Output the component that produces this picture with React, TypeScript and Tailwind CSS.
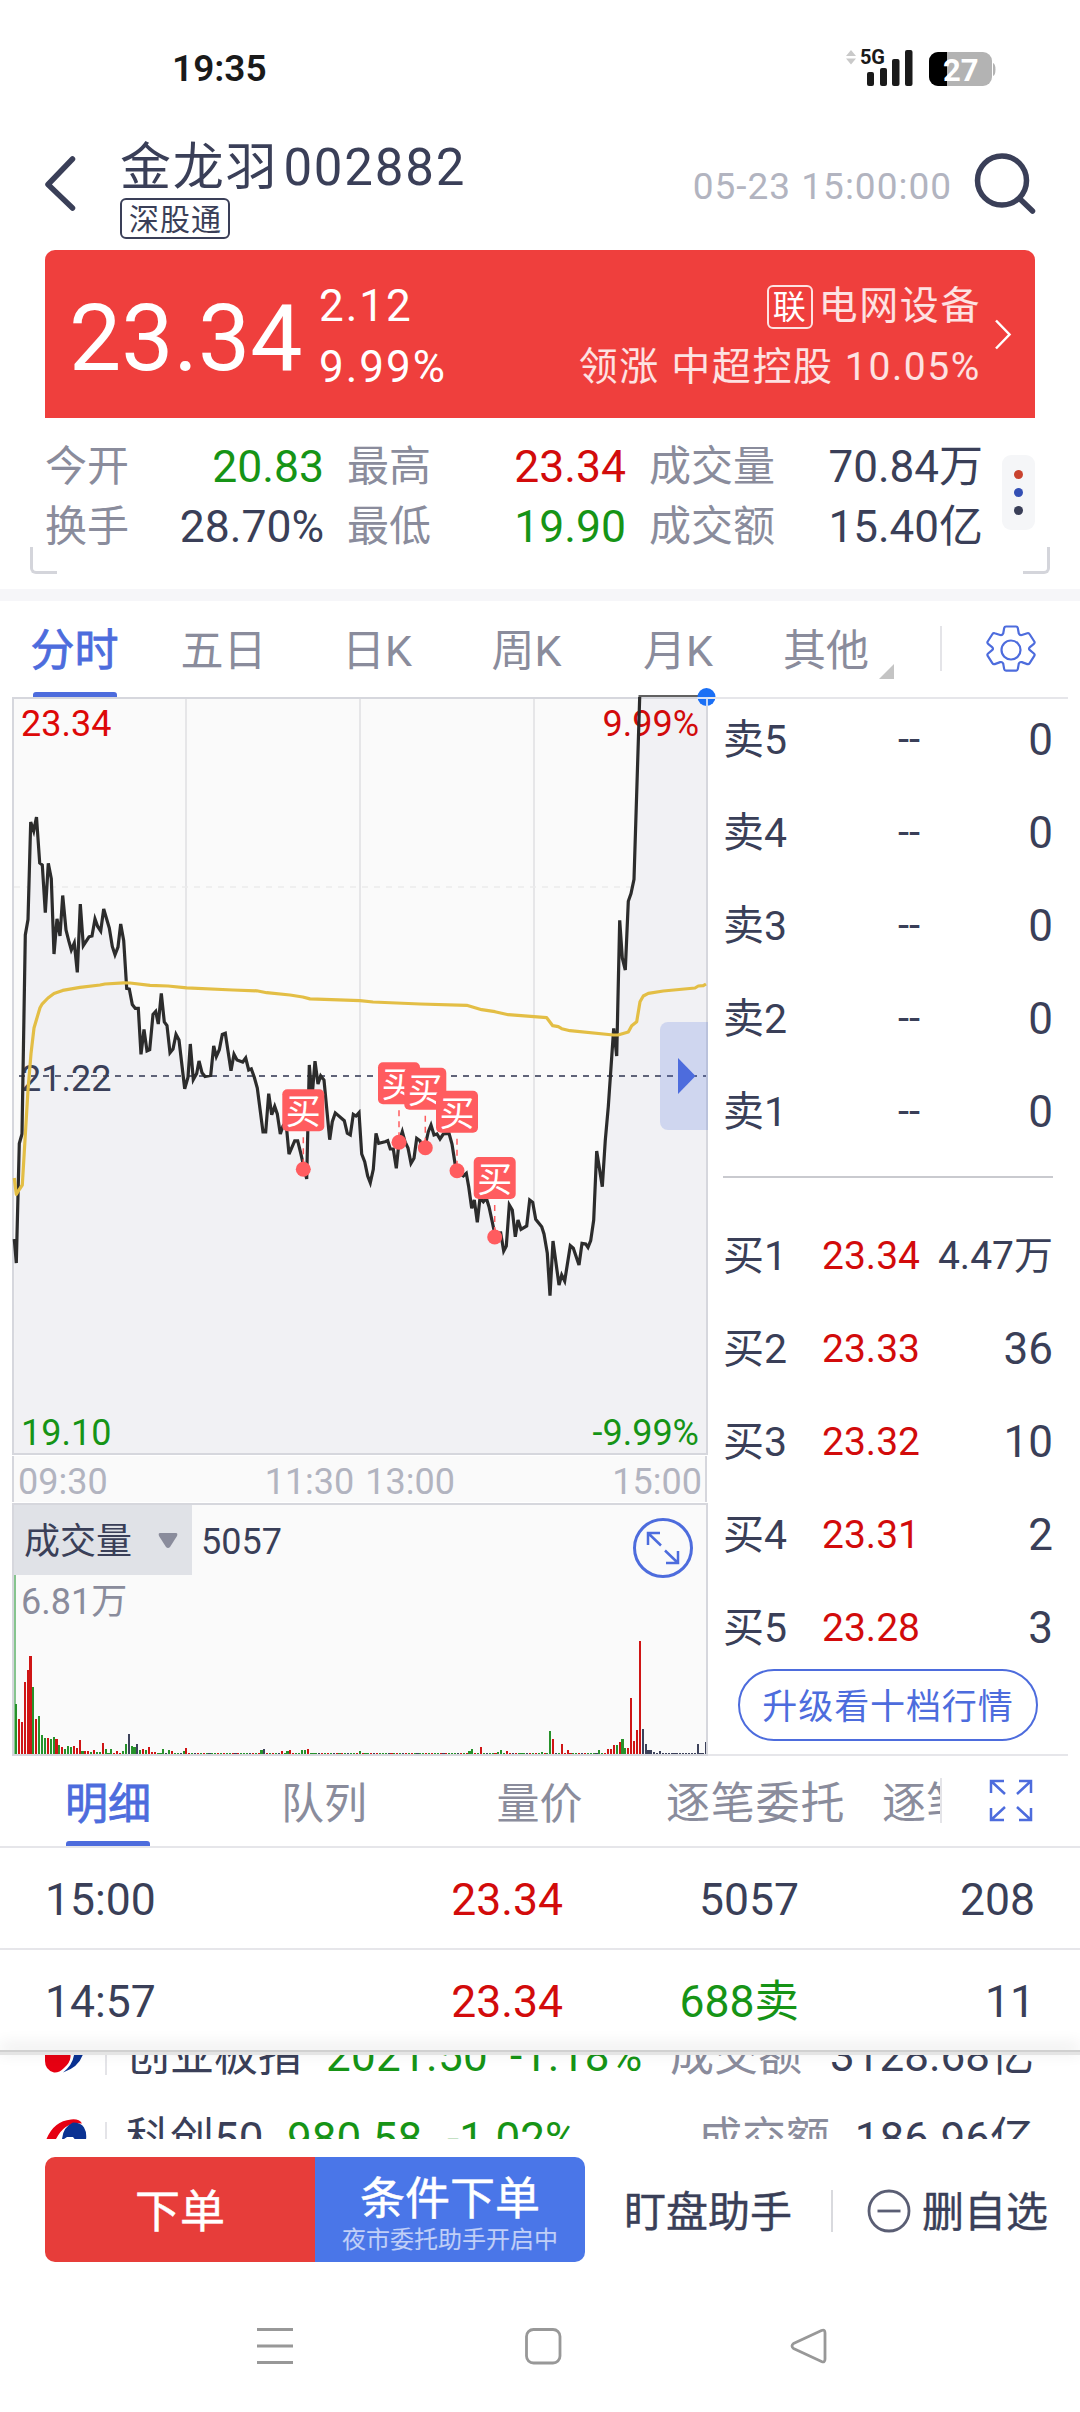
import { ReactNode } from "react";

const PRICE_LINE =
  "14.3,1239 16.3,1263 19.3,1143.5 22,1134 25.3,935 28,919.6 30.7,822 33.7,831 36.5,817 39.7,863 42.3,865 45.3,912.7 48.3,863.4 51.3,878.7 54,954 57,918.9 60,936 62.7,895.5 66,930 68.7,940.7 71.3,950 74.3,943 77.3,972.4 80.3,904 83.3,945.6 89,936.8 92,936 95,919 97.7,926.5 100.7,931 103.7,909 109.3,928 112.3,946.4 115,954.8 118,947 120.7,924 123.7,940.7 126.7,988.5 129.3,989 132.3,1004.6 135.3,1008.4 138.3,1008.4 141,1054.3 144,1029.5 147,1050.9 149.7,1049.7 153,1014.5 155.7,1011.5 158.3,1024 161.3,993.5 164.3,1022 167,1025.6 170,1052.8 173,1049 176,1034.4 179,1040 184.7,1088.8 188,1077.3 190.3,1044 193.3,1079.6 196.7,1073.5 199,1061 202,1072.7 205,1076.5 210.7,1075.4 213.7,1045.9 216.3,1056.6 219.3,1049.7 222.3,1034.4 225.3,1033.3 231,1070.8 234,1054.3 237,1060 242.7,1062 245.7,1058 248.7,1070 251.3,1068.9 254.3,1077.3 257.3,1088 263,1132 265.7,1132 268.7,1093.7 271.7,1114.8 274.7,1106.4 277.3,1114 280.3,1134 283,1126 286,1122 289,1154.2 294.7,1140.8 297.7,1140.8 300.7,1153 303.3,1164.5 306.7,1179 309.3,1065 312,1097.6 315,1061.2 318,1084 320.7,1075.8 324,1080 329.7,1139.7 332.3,1121.7 335.3,1112.9 344.3,1120.7 347.3,1133.3 350.3,1135 353.3,1114.3 356,1116 359,1112.7 361.7,1154 364.7,1161.7 367.7,1176 370.3,1182.7 373.3,1169.3 376,1133.3 378.7,1143.3 385,1141.7 387.7,1140.7 390.3,1149 393.3,1149 396.3,1168.3 399,1142 402.3,1131.7 405,1141.7 408,1148 411,1163.3 414,1158.3 416.7,1138.3 420,1140.7 422.7,1148 425.3,1145 428.3,1131.7 431,1125 434,1135 437,1134 440,1139 443.3,1134 449,1133.3 452,1144 455,1163.3 457.7,1171.7 463.3,1176 466.3,1173.3 468.7,1186.7 471.7,1208.3 474.3,1200 477.3,1222.3 480,1198 483.3,1201.7 486.3,1198 489,1206.7 494.7,1233.3 500.7,1233 503.7,1251 506.3,1246 509.3,1205 512.3,1210 515.3,1236.7 518,1220 521,1229.3 526.7,1226 529.7,1200 532.7,1202.3 535.7,1219.3 541.7,1226.7 544,1234 547.3,1253.3 550,1295.7 553,1241 559,1285 561.7,1275 564.7,1281 570.3,1245.7 573.3,1248.3 579,1265 582,1243.3 585.7,1244 588,1247.3 590.7,1240.7 593.7,1220 596.7,1151 602.3,1186.7 605.3,1140 608.3,1106.7 613.7,1028.3 616.7,1056 619.7,920.4 622.3,957.9 625.3,970 628.3,901.2 631,893.6 634,879.4 639.7,697";

const AVERAGE_LINE =
  "14.3,1178 16.3,1194.4 19.3,1189.5 22.3,1185 28,1090 31,1053.6 34,1028 40,1007.7 42.3,1003.8 48,998 54,993.5 62.7,990.4 80,987.4 100,985 105,984 123.7,982.8 130,983 150,985.4 168,986 186.7,987.8 233,990 256.7,990.8 266.7,992.7 290,995 302.7,997 310,998.9 360,1000.6 373,1002 420,1004 466.7,1005.3 481.7,1009.7 495,1011.7 508.3,1014.7 546.7,1017.7 552.7,1025.7 558.3,1026.7 561.7,1028.7 570,1030.7 613.3,1035 618,1035 628.3,1032 631.7,1025.7 636.7,1021.7 640,1001.7 643.3,996 648.3,993.3 663.3,991 695,988 698.3,986 703.3,985.7 706,984";

const BUY_POINTS = [
  { x: 303.3, y: 1169.3 },
  { x: 399, y: 1142.3 },
  { x: 425.3, y: 1147.7 },
  { x: 457, y: 1170.7 },
  { x: 494.7, y: 1237 },
];

const BAR_COLORS: Record<string, string> = { r: "#cf1515", g: "#27922b", d: "#3d425b" };

// minute index -> [direction, height]; every minute that is not listed is a flat tick
const VOLUME: Record<number, [string, number]> = {
  1: ["g", 50], 2: ["r", 35], 3: ["r", 32], 4: ["r", 72], 5: ["r", 84], 6: ["r", 98], 7: ["g", 67], 8: ["r", 35],
  9: ["g", 38], 10: ["g", 19], 11: ["g", 16], 12: ["r", 16], 13: ["g", 15], 14: ["g", 17], 15: ["r", 15], 16: ["g", 9],
  17: ["r", 7], 18: ["g", 5], 19: ["g", 8], 20: ["g", 7], 21: ["r", 8], 22: ["r", 6], 23: ["r", 14], 24: ["g", 3],
  25: ["r", 3], 26: ["r", 3], 27: ["g", 2], 28: ["r", 4], 29: ["g", 2], 30: ["g", 2], 31: ["r", 11], 32: ["g", 5],
  34: ["g", 5], 36: ["r", 3], 38: ["g", 3], 39: ["g", 10], 40: ["d", 20], 41: ["g", 8], 42: ["g", 7], 43: ["d", 10],
  44: ["g", 4], 45: ["r", 5], 46: ["g", 4], 47: ["r", 7], 48: ["r", 2], 49: ["r", 2], 52: ["g", 5], 54: ["g", 4],
  55: ["r", 3], 59: ["g", 3], 60: ["r", 6], 86: ["g", 4], 87: ["d", 5], 93: ["r", 3], 95: ["g", 3], 96: ["r", 4],
  100: ["g", 4], 101: ["g", 4], 102: ["r", 5], 120: ["g", 3], 158: ["g", 3], 159: ["g", 5], 162: ["r", 7],
  168: ["g", 2], 169: ["g", 4], 171: ["r", 3], 183: ["g", 2], 186: ["g", 23], 187: ["r", 15], 190: ["r", 10],
  192: ["r", 4], 203: ["g", 4], 206: ["r", 5], 207: ["r", 5], 208: ["r", 9], 209: ["g", 9], 210: ["r", 12],
  211: ["g", 15], 212: ["g", 6], 213: ["r", 6], 214: ["r", 56], 215: ["r", 13], 216: ["r", 24], 217: ["r", 113],
  218: ["d", 25], 219: ["d", 10], 220: ["d", 4], 221: ["d", 4], 222: ["d", 2], 224: ["d", 3], 237: ["d", 10],
  240: ["d", 12],
};

const STATS = [
  [
    { label: "今开", value: "20.83", tone: "text-[#169416]" },
    { label: "最高", value: "23.34", tone: "text-[#d20b0b]" },
    { label: "成交量", value: "70.84万", tone: "text-[#3a3f58]" },
  ],
  [
    { label: "换手", value: "28.70%", tone: "text-[#3a3f58]" },
    { label: "最低", value: "19.90", tone: "text-[#169416]" },
    { label: "成交额", value: "15.40亿", tone: "text-[#3a3f58]" },
  ],
];

const SELLS = ["卖5", "卖4", "卖3", "卖2", "卖1"];

const BUYS = [
  { label: "买1", price: "23.34", qty: "4.47万", small: true },
  { label: "买2", price: "23.33", qty: "36" },
  { label: "买3", price: "23.32", qty: "10" },
  { label: "买4", price: "23.31", qty: "2" },
  { label: "买5", price: "23.28", qty: "3" },
];

export default function App() {
  return (
    <div className="flex h-[2412px] w-[1080px] flex-col overflow-hidden bg-white font-[Roboto,'Noto_Sans_CJK_SC',sans-serif] text-[#3a3f58]">
      <StatusBar />
      <Header />
      <QuoteCard />
      <Stats />
      <div className="h-3 shrink-0 bg-[#f6f6f9]" />
      <PeriodTabs />
      <div className="flex h-[1059px] shrink-0">
        <div className="ml-3 flex w-[696px] shrink-0 flex-col">
          <PriceChart />
          <TimeAxis />
          <VolumePanel />
        </div>
        <OrderBook />
      </div>
      <DetailTabs />
      <TickRow time="15:00" price="23.34" volume="5057" count="208" />
      <TickRow time="14:57" price="23.34" volume="688卖" count="11" sell />
      <div className="relative z-10 h-[5px] shrink-0 border-t-2 border-[#d0d0d0] bg-[#e4e4e4] shadow-[0_-4px_16px_rgba(0,0,0,0.16)]" />
      <IndexList />
      <ActionBar />
      <SystemNav />
    </div>
  );
}

function StatusBar() {
  return (
    <div className="flex h-[136px] shrink-0 items-center pl-[172px] text-[#1a1a1a]">
      <span className="text-[37px] leading-none font-semibold">19:35</span>
      <svg className="ml-auto mr-[84px] h-11 w-[152px]" viewBox="844 47 152 44">
        <path d="M846 57l5-6 5 6zM846 59.500l5 6 5-6z" fill="#c9c9c9" />
        <text x="860" y="65" fontSize="20" fontWeight="700" textLength="25" fill="#1a1a1a">5G</text>
        <rect x="867" y="73" width="7" height="14" rx="2" fill="#1a1a1a" />
        <rect x="880" y="69" width="7" height="18" rx="2" fill="#1a1a1a" />
        <rect x="892" y="60" width="7.500" height="27" rx="2" fill="#1a1a1a" />
        <rect x="905" y="51" width="7.500" height="36" rx="2" fill="#1a1a1a" />
        <path d="M938 53h45a9 9 0 0 1 9 9v16a9 9 0 0 1-9 9h-45a9 9 0 0 1-9-9V62a9 9 0 0 1 9-9z" fill="#b3b3b3" />
        <path d="M993 64q2.500 1 2.500 6.500t-2.500 6.500z" fill="#b3b3b3" />
        <path d="M947 53h-9a9 9 0 0 0-9 9v16a9 9 0 0 0 9 9h9z" fill="#000" />
        <text x="943" y="81.500" fontSize="31" fontWeight="700" fill="#fff">27</text>
      </svg>
    </div>
  );
}

function Header() {
  return (
    <header className="flex h-[114px] shrink-0 items-start pl-[44px]">
      <svg className="mt-[19px] h-[58px] w-[36px]" viewBox="0 0 36 58" fill="none" stroke="#3a3f58" strokeWidth="5.500" strokeLinecap="round" strokeLinejoin="round">
        <path d="M28.500 4L4 29.500l24.500 23.500" />
      </svg>
      <div className="ml-10 flex flex-col items-start">
        <div className="flex h-[60px] items-center gap-[5px] pt-1 whitespace-nowrap text-[51px] leading-[60px] tracking-[1.8px]">
          <span>金龙羽</span>
          <span>002882</span>
        </div>
        <span className="mt-[2px] flex h-[41px] w-[110px] items-center justify-center rounded-md border-2 border-[#3a3f58] pt-[3px] pl-px text-[30px] leading-none tracking-[1px]">
          深股通
        </span>
      </div>
      <span className="mt-[27px] -mr-[2px] ml-auto text-[37px] leading-[48px] tracking-[1px] text-[#b2b4c0]">05-23 15:00:00</span>
      <svg className="mt-[14px] mr-[42px] ml-[22px] h-[64px] w-[66px]" viewBox="972 150 66 64" fill="none" stroke="#3a3f58" strokeWidth="5.500" strokeLinecap="round">
        <circle cx="1002" cy="180.500" r="24.500" />
        <path d="M1020 199l12.500 12" />
      </svg>
    </header>
  );
}

function QuoteCard() {
  return (
    <section className="mx-[45px] flex h-[168px] shrink-0 rounded-t-[10px] bg-[#ef3f3d] pl-[24px] text-white">
      <span className="mt-[42px] h-[94px] w-[234px] text-[93px] leading-[94px]">23.34</span>
      <div className="mt-[26px] ml-[16px] text-[44px] leading-[60.500px] tracking-[2px]">
        <div>2.12</div>
        <div>9.99%</div>
      </div>
      <div className="mt-[26px] ml-auto flex flex-col items-end text-[39px] leading-[61px] tracking-[1.6px] text-white/85">
        <div className="flex items-center">
          <span className="mr-[6px] flex h-11 w-[46px] items-center justify-center rounded-md border-2 border-white/85 pt-[2px] pl-px text-[33px] leading-none text-white">联</span>
          电网设备
        </div>
        <div>领涨 中超控股 10.05%</div>
      </div>
      <svg className="mt-[67px] mr-[22px] ml-[12px] h-[36px] w-[20px]" viewBox="0 0 20 36" fill="none" stroke="#fff" strokeWidth="2.500">
        <path d="M3 3.500l13.500 14L3 31.500" />
      </svg>
    </section>
  );
}

function Stats() {
  return (
    <section className="relative flex h-[171px] shrink-0 pt-[19px] pl-[45px]">
      <div className="flex w-[937px] flex-col">
        {STATS.map((row, i) => (
          <div key={i} className="grid h-[60px] grid-cols-[279px_279px_334px] items-center gap-x-[23px] whitespace-nowrap">
            {row.map(({ label, value, tone }) => (
              <div key={label} className="flex items-center justify-between">
                <span className="text-[42px] leading-[60px] text-[#8a8c9c]">{label}</span>
                <span className={`${/[万亿]/.test(value) ? "text-[44px]" : "text-[44.5px]"} leading-[60px] ${tone}`}>{value}</span>
              </div>
            ))}
          </div>
        ))}
      </div>
      <div className="mt-[18px] ml-[20px] flex h-[75px] w-[33px] flex-col items-center justify-center gap-[9px] rounded-[9px] bg-[#f5f6f8]">
        <i className="size-[9px] rounded-full bg-[#c9432f]" />
        <i className="size-[9px] rounded-full bg-[#3450b4]" />
        <i className="size-[9px] rounded-full bg-[#3a3f58]" />
      </div>
      <div className="absolute bottom-[15px] left-[30px] h-[27px] w-[27px] rounded-bl-md border-b-3 border-l-3 border-[#d4d5db]" />
      <div className="absolute right-[30px] bottom-[15px] h-[27px] w-[27px] rounded-br-md border-r-3 border-b-3 border-[#d4d5db]" />
    </section>
  );
}

function PeriodTabs() {
  return (
    <nav className="flex h-24 shrink-0 text-[43px] leading-[100px] whitespace-nowrap text-[#8a8c9c]">
      <div className="flex w-[149px] flex-col items-center justify-between text-[44px] text-[#4d6cdd]">
        <span className="h-[91px] [-webkit-text-stroke:0.8px_#4d6cdd]">分时</span>
        <i className="h-[5px] w-[84px] rounded-t-[3px] bg-[#4d6cdd]" />
      </div>
      <span className="w-[149px] text-center">五日</span>
      <span className="w-[158px] text-center">日K</span>
      <span className="w-[141px] text-center">周K</span>
      <span className="w-[162px] text-center">月K</span>
      <span className="ml-[24px] flex w-[112px] items-start">
        <span>其他</span>
        <svg className="mt-[63px] ml-[10px] size-[15px] shrink-0" viewBox="0 0 15 15">
          <path d="M15 0v15H0z" fill="#c4c4c4" />
        </svg>
      </span>
      <i className="mt-[25px] ml-[45px] h-[45px] w-[2px] bg-[#e4e4e8]" />
      <GearIcon />
    </nav>
  );
}

function GearIcon() {
  return (
    <svg className="mt-[22px] ml-[42px] size-[54px]" viewBox="-27 -27 54 54" fill="none" stroke="#4d6cdd" strokeWidth="2.200" strokeLinejoin="round">
      <path d="M-5 -23.500h10q1.500 0 1.800 1.500l1 5.500q1 2 3 1.500l5.500-1.800q1.500-.5 2.200.8l4.800 7.500q.8 1.400-.4 2.300l-4 3.300q-1.800 1.600 0 3.100l4 3.300q1.200 1 .4 2.300l-4.800 7.500q-.8 1.300-2.200.8l-5.500-2q-2-.5-3 1.500l-1 5.500q-.3 1.500-1.800 1.500h-10q-1.500 0-1.800-1.500l-1-5.500q-1-2-3-1.500l-5.500 2q-1.500.5-2.200-.8l-4.800-7.500q-.8-1.300.4-2.300l4-3.300q1.800-1.500 0-3.100l-4-3.300q-1.200-.9-.4-2.300l4.800-7.500q.8-1.300 2.200-.8l5.500 1.800q2 .5 3-1.500l1-5.500q.3-1.500 1.800-1.500z" />
      <circle r="9.500" />
    </svg>
  );
}

function PriceChart() {
  return (
    <svg className="block h-[759px] w-[696px] shrink-0 overflow-visible" viewBox="12 697 696 759" fontSize="36">
      <rect x="13" y="698" width="694" height="756" fill="#fafafa" />
      <path d="M186 699V1454M360 699V1454M534 699V1454" stroke="#e6e6e8" strokeWidth="2" />
      <path d="M14 887H706" stroke="#ebebeb" strokeWidth="1.500" strokeDasharray="6 6" />
      <polygon points={`14,1454 ${PRICE_LINE} 706,697 706,1454`} fill="#f1f1f4" />
      <rect x="13" y="698" width="694" height="756" fill="none" stroke="#d6d7dd" strokeWidth="2" />
      <path d="M14 1076H706" stroke="#5f6378" strokeWidth="2" strokeDasharray="6 6" strokeDashoffset="7" />

      <text x="21" y="736" fill="#dd0808">23.34</text>
      <text x="699" y="736" textAnchor="end" fill="#d20b0b">9.99%</text>
      <text x="21" y="1091" fill="#3a3f58">21.22</text>
      <text x="21" y="1445" fill="#169416">19.10</text>
      <text x="699" y="1445" textAnchor="end" fill="#169416">-9.99%</text>

      <polyline points={PRICE_LINE} fill="none" stroke="#2c2c2c" strokeWidth="3.200" strokeLinejoin="miter" />
      <path d="M638.500 696H700" stroke="#2c2c2c" strokeWidth="1.600" />
      <polyline points={AVERAGE_LINE} fill="none" stroke="#e3be45" strokeWidth="3.200" strokeLinejoin="round" />

      {BUY_POINTS.map(({ x, y }) => (
        <g key={x}>
          <path d={`M${x} ${y - 32}V${y}`} stroke="#ff5c5f" strokeWidth="1.500" strokeDasharray="6 5" />
          <circle cx={x} cy={y} r="7.500" fill="#ff5c5f" />
          <rect x={x - 21} y={y - 80} width="42" height="42" rx="5" fill="#ff5c5f" />
          <text x={x} y={y - 45} textAnchor="middle" fontSize="35" fill="#fff">买</text>
        </g>
      ))}

      <path d="M708 1022H668a8 8 0 0 0-8 8v92a8 8 0 0 0 8 8h40z" fill="#4d6cdd" fillOpacity="0.2" />
      <path d="M678 1058l17.500 18-17.500 18z" fill="#4d6cdd" />
      <circle cx="706.500" cy="697" r="9" fill="#1a6ff5" />
      <path d="M697 698H716M707 699V706" stroke="#d3e1fa" strokeWidth="1.800" />
    </svg>
  );
}

function TimeAxis() {
  return (
    <div className="mr-px flex h-[46px] shrink-0 border-x-2 border-[#d6d7dd] bg-[#fafafa] pr-[3px] pl-1 text-[36px] leading-[52px] text-[#b2b4c0]">
      <span>09:30</span>
      <span className="ml-[157px]">11:30</span>
      <span className="ml-[11px]">13:00</span>
      <span className="ml-auto">15:00</span>
    </div>
  );
}

function VolumePanel() {
  return (
    <div className="mt-px flex h-[253px] shrink-0 flex-col border-2 border-[#d6d7dd] bg-[#fafafa]">
      <div className="flex h-[70px] shrink-0 items-start">
        <div className="flex h-[70px] w-[178px] items-center bg-[#e0e2e7] pl-[10px] text-[36px] leading-none">
          <span className="pt-1">成交量</span>
          <svg className="ml-[26px] h-[17px] w-5" viewBox="0 0 20 17">
            <path d="M2 1h16q2 0 1 3l-7 11q-2 2-4 0L1 4Q0 1 2 1z" fill="#8a8c9c" />
          </svg>
        </div>
        <span className="ml-[9px] text-[36px] leading-[74px]">5057</span>
        <svg className="mt-[12px] mr-[12px] ml-auto size-[62px]" viewBox="632 1517 62 62" fill="none" stroke="#4d6cdd" strokeWidth="3">
          <circle cx="663" cy="1548" r="28.500" />
          <path d="M648 1545v-12h12M648 1533l13 12.500M678 1551v12h-12M678 1563l-13-12.500" strokeWidth="2.500" />
        </svg>
      </div>
      <svg className="block h-[179px] w-[692px]" viewBox="0 0 692 179" shapeRendering="crispEdges">
        <rect x="0" y="0" width="2" height="179" fill="#86c48e" />
        <text x="7" y="39" fontSize="36" fill="#8a8c9c">6.81万</text>
        {Array.from({ length: 240 }, (_, i) => {
          const [tone, h] = VOLUME[i + 1] ?? [i > 217 ? "d" : "rggrgd"[(i * 7 + (i >> 2)) % 6], 1.5];
          return <rect key={i} x={1 + i * 2.888} y={179 - h} width="2.100" height={h} fill={BAR_COLORS[tone]} />;
        })}
      </svg>
    </div>
  );
}

function OrderBook() {
  return (
    <div className="flex w-[360px] shrink-0 flex-col border-y-2 border-[#e6e6ea] pr-[15px] pl-[15px]">
      <div className="-mt-[6px]">
        {SELLS.map((label) => (
          <BookRow key={label} label={label} qty="0" price={<span className="text-[40px]">--</span>} />
        ))}
      </div>
      <i className="mt-[18px] h-[2px] shrink-0 bg-[#c9cacf]" />
      <div className="mt-8">
        {BUYS.map(({ label, price, qty, small }) => (
          <BookRow key={label} label={label} qty={qty} small={small} price={<span className="text-[#d20b0b]">{price}</span>} />
        ))}
      </div>
      <button className="-mt-[6px] ml-[15px] flex h-[72px] w-[300px] shrink-0 items-center justify-center rounded-full border-2 border-[#4d6cdd] bg-white pt-[5px] text-[35px] leading-none tracking-[0.9px] text-[#4d6cdd]">
        升级看十档行情
      </button>
    </div>
  );
}

function BookRow({ label, price, qty, small }: { label: string; price: ReactNode; qty: string; small?: boolean }) {
  return (
    <div className="grid h-[93px] grid-cols-[78px_119px_133px] items-center leading-[93px]">
      <span className="text-[41px]">{label}</span>
      <span className="text-right text-[39px]">{price}</span>
      <span className={`text-right whitespace-nowrap ${small ? "text-[39px]" : "text-[44px]"}`}>{qty}</span>
    </div>
  );
}

function DetailTabs() {
  return (
    <nav className="flex h-[92px] shrink-0 border-b-2 border-[#e6e6ea] text-[43px] leading-[97px] whitespace-nowrap text-[#8a8c9c]">
      <div className="flex w-[216px] flex-col items-center text-[#4d6cdd]">
        <span className="h-[85px] [-webkit-text-stroke:0.8px_#4d6cdd]">明细</span>
        <i className="h-[5px] w-[84px] rounded-t-[3px] bg-[#4d6cdd]" />
      </div>
      <span className="w-[216px] text-center">队列</span>
      <span className="w-[215px] text-center">量价</span>
      <span className="ml-[19px] w-[180px] text-[44px] tracking-[0.8px]">逐笔委托</span>
      <span className="ml-[36px] w-[58px] overflow-hidden text-[44px]">逐笔成交</span>
      <i className="mt-[22px] h-[45px] w-[2px] bg-[#e4e4e8]" />
      <svg className="mt-[23px] ml-[47px] h-[44px] w-[44px]" viewBox="989 1779 44 44" fill="none" stroke="#4d6cdd" strokeWidth="2.500">
        <path d="M991 1793v-12h13M991 1781l14 13M1019 1781h12v12M1031 1781l-14 13M991 1808v12h13M991 1820l14-13M1019 1820h12v-12M1031 1820l-14-13" />
      </svg>
    </nav>
  );
}

function TickRow({ time, price, volume, count, sell }: { time: string; price: string; volume: string; count: string; sell?: boolean }) {
  return (
    <div className={`grid shrink-0 grid-cols-[200px_318px_236px_236px] items-center px-[45px] pt-1 text-[44.5px] leading-[96px] ${sell ? "h-[100px]" : "h-[102px] border-b-2 border-[#e6e6ea]"}`}>
      <span>{time}</span>
      <span className="text-right text-[#d20b0b]">{price}</span>
      <span className={`text-right ${sell ? "text-[#169416]" : ""}`}>{volume}</span>
      <span className="text-right">{count}</span>
    </div>
  );
}

function IndexList() {
  return (
    <div className="h-[84px] shrink-0 overflow-hidden text-[44px] leading-[83px] whitespace-nowrap">
      <div className="-mt-[40px] grid h-[83px] grid-cols-[41px_40px_200px_184px_160px_364px] items-center pl-[45px]">
        <svg className="size-[40px]" viewBox="0 0 40 40">
          <path d="M0 18Q1 4 14 4q12 2 11.500 16Q25 26 19 31q-5 5-10 4.500Q0 33 0 24z" fill="#e60012" />
          <path d="M39.500 6Q40 28 18 35.500 29 27 29.500 14z" fill="#0a3292" />
        </svg>
        <i className="ml-[19px] h-[36px] w-[2px] bg-[#e4e4e8]" />
        <span>创业板指</span>
        <span className="tracking-[0.3px] text-[#169416]">2021.50</span>
        <span className="tracking-[0.4px] text-[#169416]">-1.18%</span>
        <span className="flex justify-between">
          <span className="text-[#8a8c9c]">成交额</span>
          <span>3128.68亿</span>
        </span>
      </div>
      <div className="grid h-[83px] grid-cols-[41px_40px_161px_160px_251px_336px] items-center pl-[45px]">
        <svg className="size-[42px]" viewBox="0 0 42 42">
          <path d="M1.500 20Q9 2 26 .500q8-1 11 4Q20 2 11 20z" fill="#e60012" />
          <path d="M17 20Q18 8 28 3.500q8 0 11 5 3 5 2 12H30l-2-2.500h-6l-3 2z" fill="#0a3292" />
        </svg>
        <i className="ml-[19px] h-[36px] w-[2px] bg-[#e4e4e8]" />
        <span>科创50</span>
        <span className="text-[#169416]">980.58</span>
        <span className="text-[#169416]">-1.02%</span>
        <span className="flex justify-between">
          <span className="text-[#8a8c9c]">成交额</span>
          <span>186.96亿</span>
        </span>
      </div>
    </div>
  );
}

function ActionBar() {
  return (
    <div className="flex h-[140px] shrink-0 items-start pt-[18px] pl-[45px]">
      <div className="flex h-[105px] w-[540px] shrink-0 overflow-hidden rounded-[10px] text-[45px] text-white">
        <button className="flex w-[270px] items-center justify-center bg-[#e73d3a] pt-[5px] leading-none [-webkit-text-stroke:0.5px_#fff]">下单</button>
        <button className="flex w-[270px] flex-col items-center bg-[#4a76e8] pt-[18px]">
          <span className="leading-[50px] [-webkit-text-stroke:0.5px_#fff]">条件下单</span>
          <span className="text-[24px] leading-[30px] text-white/65">夜市委托助手开启中</span>
        </button>
      </div>
      <div className="flex h-[108px] items-center text-[42px] leading-none whitespace-nowrap">
        <span className="ml-[39px] pt-[3px] [-webkit-text-stroke:0.4px_#3a3f58]">盯盘助手</span>
        <i className="ml-[39px] h-[42px] w-[2px] bg-[#d9dade]" />
        <svg className="ml-[33px] size-[46px]" viewBox="0 0 46 46" fill="none" stroke="#5a5e74" strokeWidth="2.800">
          <circle cx="23" cy="23" r="20" />
          <path d="M11.500 23h23" />
        </svg>
        <span className="ml-[10px] pt-[3px] [-webkit-text-stroke:0.4px_#3a3f58]">删自选</span>
      </div>
    </div>
  );
}

function SystemNav() {
  return (
    <svg className="mt-[46px] h-[42px] w-[1080px] shrink-0" viewBox="0 2325 1080 42" fill="none" stroke="#989898" strokeWidth="2.800">
      <path d="M257 2329.500h36M257 2346h36M257 2362.500h36" />
      <rect x="526.500" y="2329.500" width="33.500" height="33.500" rx="7" />
      <path d="M821.500 2330.500q3.500-1.500 3.500 2.500v26q0 4-3.500 2.500l-28-13q-3-2.500 0-5z" strokeLinejoin="round" />
    </svg>
  );
}
